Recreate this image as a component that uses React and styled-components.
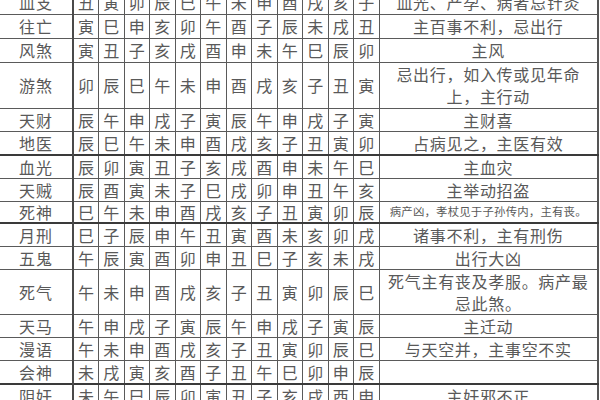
import React from 'react';
import styled, { createGlobalStyle } from 'styled-components';

const GlobalStyle = createGlobalStyle`
  html, body {
    margin: 0;
    padding: 0;
    background: #fff;
    overflow: hidden;
  }
`;

const Page = styled.div`
  width: 600px;
  height: 400px;
  overflow: hidden;
  background: #fff;
`;

const Table = styled.table`
  width: 598px;
  margin-top: -9px;
  border-collapse: collapse;
  table-layout: fixed;
  font-family: "Noto Sans CJK SC", "Noto Sans", sans-serif;
  color: #595959;
  border-right: 2px solid #555;
`;

const Row = styled.tr`
  height: ${(p) => p.$h}px;
  border-bottom: ${(p) => (p.$thick ? '2px solid #3a3a3a' : '1px solid #5a5a5a')};
`;

const Label = styled.td`
  width: 73px;
  padding: 0;
  text-align: center;
  vertical-align: middle;
  font-size: 16px;
  line-height: 1;
  letter-spacing: 1px;
  border-right: 2px solid #4a4a4a;
`;

const Cell = styled.td`
  padding: 0;
  text-align: center;
  vertical-align: middle;
  font-size: 16px;
  line-height: 1;
  border-right: 1px solid #5a5a5a;
`;

const Desc = styled.td`
  padding: 0 4px;
  text-align: center;
  vertical-align: middle;
  font-size: ${(p) => (p.$small ? '11.4px' : '16px')};
  letter-spacing: ${(p) => (p.$small ? '0.2px' : '0.7px')};
  line-height: ${(p) => (p.$small ? 1 : '22px')};
  white-space: nowrap;
`;

const rows = [
  { label: '血支', cells: '丑寅卯辰巳午未申酉戌亥子', desc: ['血光、产孕、病者忌针灸'], h: 23 },
  { label: '往亡', cells: '寅巳申亥卯午酉子辰未戌丑', desc: ['主百事不利，忌出行'], h: 24 },
  { label: '风煞', cells: '寅丑子亥戌酉申未午巳辰卯', desc: ['主风'], h: 24 },
  { label: '游煞', cells: '卯辰巳午未申酉戌亥子丑寅', desc: ['忌出行，如入传或见年命', '上，主行动'], h: 46 },
  { label: '天财', cells: '辰午申戌子寅辰午申戌子寅', desc: ['主财喜'], h: 23 },
  { label: '地医', cells: '辰巳午未申酉戌亥子丑寅卯', desc: ['占病见之，主医有效'], h: 23, thick: true },
  { label: '血光', cells: '辰卯寅丑子亥戌酉申未午巳', desc: ['主血灾'], h: 23 },
  { label: '天贼', cells: '辰酉寅未子巳戌卯申丑午亥', desc: ['主举动招盗'], h: 23 },
  { label: '死神', cells: '巳午未申酉戌亥子丑寅卯辰', desc: ['病产凶，孝杖见于子孙传内，主有丧。'], h: 22, small: true, thick: true },
  { label: '月刑', cells: '巳子辰申午丑寅酉未亥卯戌', desc: ['诸事不利，主有刑伤'], h: 23 },
  { label: '五鬼', cells: '午辰寅酉卯申丑巳子亥未戌', desc: ['出行大凶'], h: 23 },
  { label: '死气', cells: '午未申酉戌亥子丑寅卯辰巳', desc: ['死气主有丧及孝服。病产最', '忌此煞。'], h: 45 },
  { label: '天马', cells: '午申戌子寅辰午申戌子寅辰', desc: ['主迁动'], h: 23 },
  { label: '漫语', cells: '午未申酉戌亥子丑寅卯辰巳', desc: ['与天空并，主事空不实'], h: 23 },
  { label: '会神', cells: '未戌寅亥酉子丑午巳卯申辰', desc: [], h: 23, thick: true },
  { label: '阴奸', cells: '未午巳辰卯寅丑子亥戌酉申', desc: ['主奸邪不正'], h: 23 },
];

export default function App() {
  return (
    <Page>
      <GlobalStyle />
      <Table>
        <colgroup>
          <col style={{ width: 73 }} />
          {Array.from({ length: 12 }).map((_, i) => (
            <col key={i} style={{ width: 25.5 }} />
          ))}
          <col style={{ width: 219 }} />
        </colgroup>
        <tbody>
          {rows.map((r) => (
            <Row key={r.label} $h={r.h} $thick={r.thick}>
              <Label>{r.label}</Label>
              {r.cells.split('').map((c, i) => (
                <Cell key={i}>{c}</Cell>
              ))}
              <Desc $small={r.small}>
                {r.desc.map((line, i) => (
                  <React.Fragment key={i}>
                    {i > 0 && <br />}
                    {line}
                  </React.Fragment>
                ))}
              </Desc>
            </Row>
          ))}
        </tbody>
      </Table>
    </Page>
  );
}
